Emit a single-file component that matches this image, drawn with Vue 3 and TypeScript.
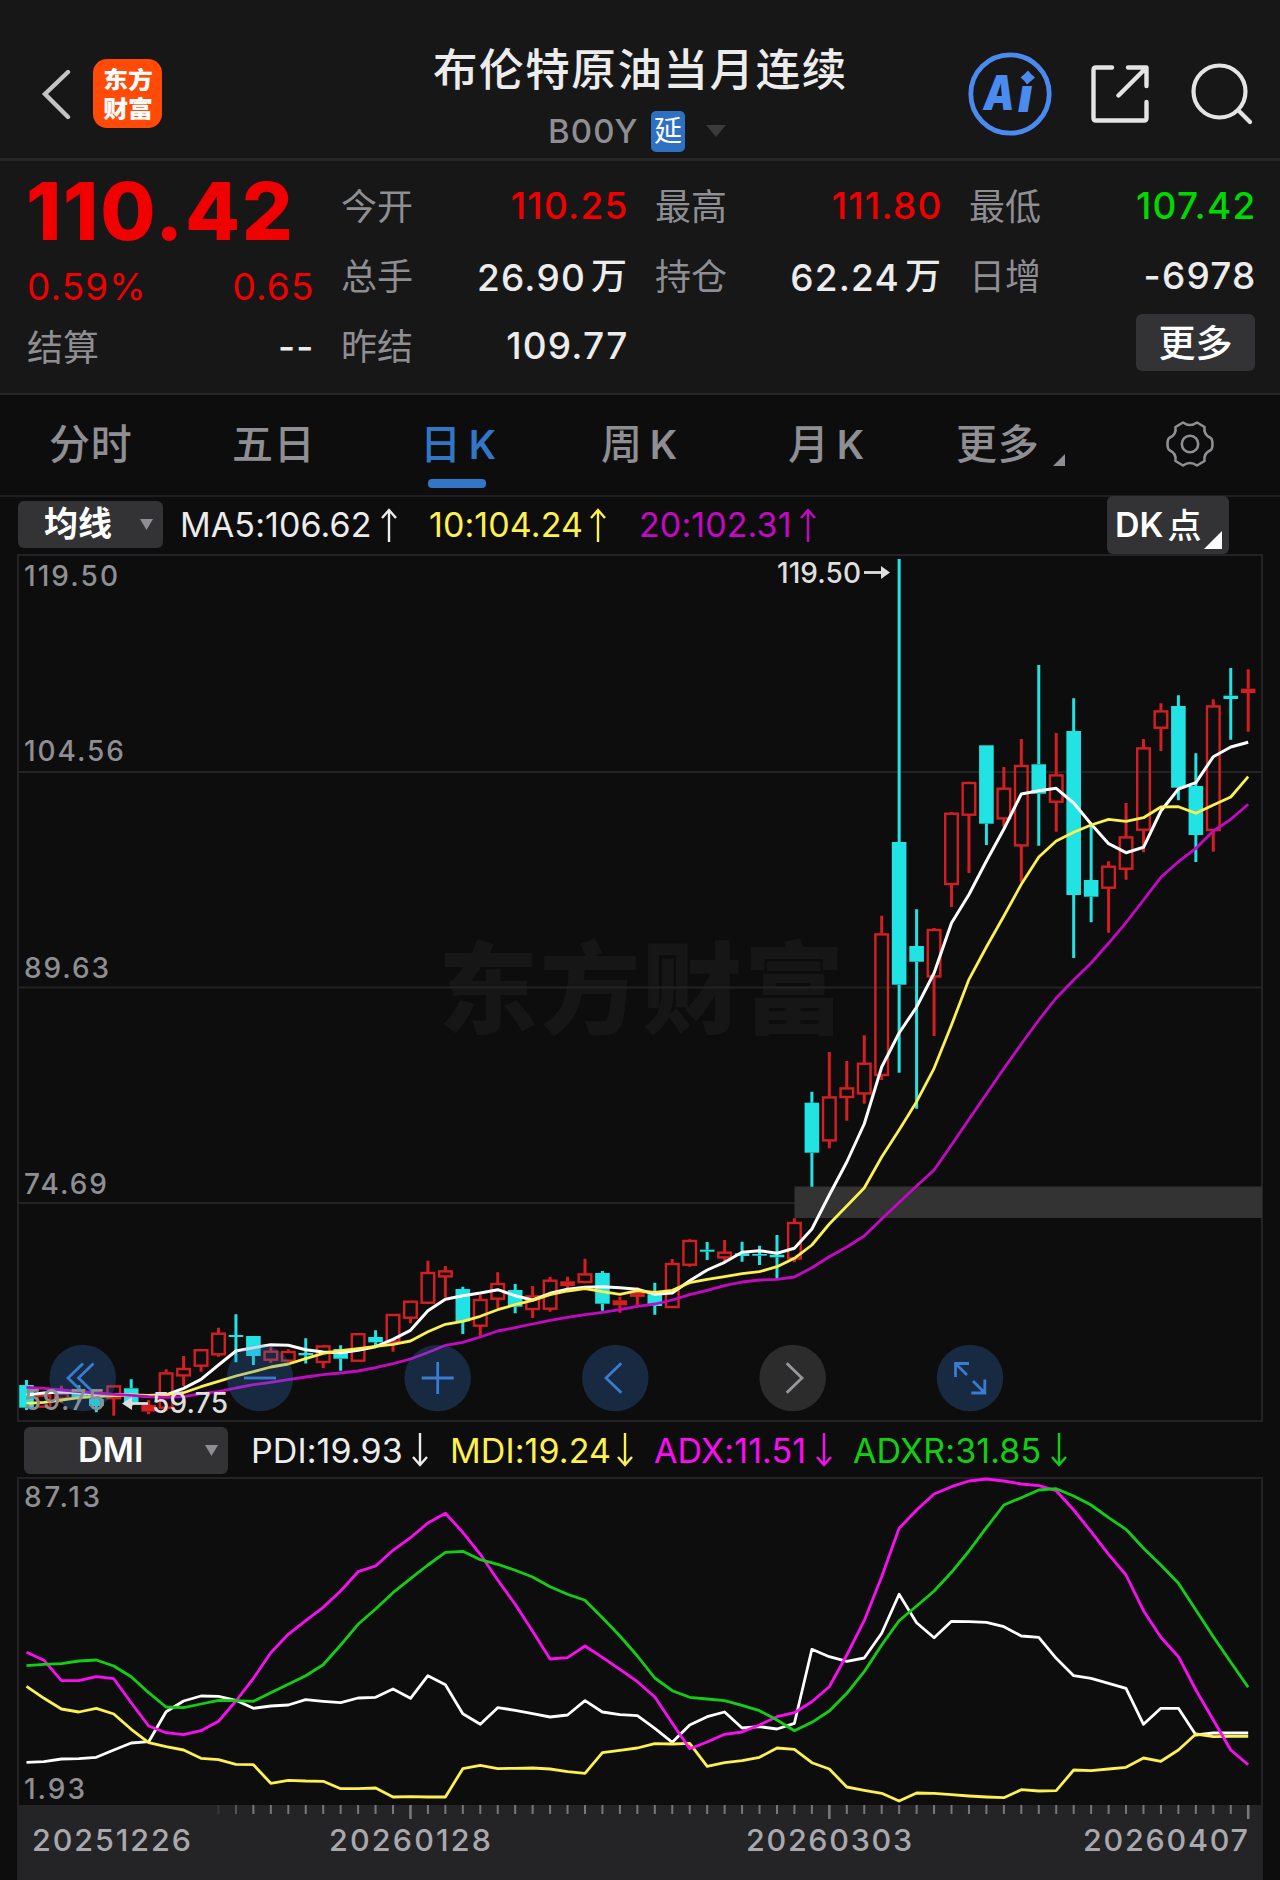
<script setup lang="ts">
interface Candle { x: number; up: boolean; solid: boolean; high: number; top: number; bottom: number; low: number }
type Row = [number, number, number, number, number]

const FIRST_X = 26.5
const STEP = 17.453
const xAt = (i: number) => FIRST_X + STEP * i

// kind (0 = falling, 1 = rising, 2 = rising with a thin solid body), high, body top, body bottom, low
const rows: Row[] = [
  [0, 1380, 1385, 1407.7, 1410], [1, 1392, 1395, 1407, 1407], [1, 1385.7, 1393, 1399, 1403], [0, 1385.3, 1392, 1397, 1402],
  [0, 1393, 1399, 1406, 1412.3], [1, 1385.7, 1385.7, 1398.5, 1415.7], [0, 1379.3, 1388.3, 1404, 1406], [2, 1400, 1405, 1411.5, 1414.3],
  [1, 1369.3, 1372.7, 1408, 1411], [1, 1356, 1368.3, 1375.7, 1386], [1, 1349.5, 1349.5, 1366, 1371.7], [1, 1327.7, 1333, 1354.6, 1356.7],
  [0, 1314.3, 1335, 1337, 1362.3], [0, 1336, 1336, 1356, 1365], [1, 1347.3, 1351, 1360, 1362.7], [1, 1349.3, 1351.3, 1361, 1361],
  [0, 1338.3, 1353, 1355.3, 1363.5], [1, 1345, 1345.7, 1362.3, 1368], [0, 1345.3, 1349, 1358.7, 1370.7], [1, 1333.5, 1333.5, 1361, 1361],
  [0, 1330.3, 1337, 1342.3, 1346], [1, 1314.3, 1314.3, 1341.7, 1351.7], [1, 1301, 1301, 1318, 1323.3], [1, 1260.7, 1272.3, 1303, 1304],
  [1, 1266, 1270.7, 1276.7, 1297.3], [0, 1286.7, 1289, 1321.3, 1334], [1, 1295, 1299.3, 1326, 1335.7], [1, 1272.3, 1283.3, 1299, 1308.3],
  [0, 1284, 1290, 1306.7, 1313.3], [1, 1286, 1295.7, 1309.3, 1318], [1, 1276.7, 1280, 1309, 1311.7], [2, 1276.7, 1281.3, 1286, 1289.3],
  [1, 1258.7, 1273.7, 1282.3, 1283.3], [0, 1271, 1273, 1303.7, 1310.7], [2, 1296.7, 1300.3, 1305.3, 1312.7], [1, 1287.3, 1292.5, 1296, 1306],
  [0, 1282.7, 1294.3, 1306, 1314.7], [1, 1259, 1263.3, 1307.3, 1307.3], [1, 1239.3, 1240.3, 1265, 1266.7], [0, 1242, 1249.7, 1251.7, 1260],
  [1, 1240, 1252, 1257.7, 1261], [0, 1241.7, 1253.3, 1256, 1261.7], [0, 1245.7, 1254, 1255.7, 1265], [0, 1235, 1254.7, 1257.3, 1279],
  [1, 1218.3, 1222.3, 1258.7, 1262.3], [0, 1091.7, 1102.7, 1152.7, 1186.7], [1, 1052, 1096.7, 1140.7, 1148.3], [1, 1061, 1087.7, 1097.3, 1120.7],
  [1, 1035.3, 1063, 1093.7, 1103.7], [1, 915.7, 933.7, 1075.3, 1080], [0, 559, 842, 984.7, 1072.7], [0, 909.3, 946, 961.7, 1108.7],
  [1, 928, 929.3, 976.7, 1036], [1, 812.3, 813, 884.3, 907], [1, 781.7, 782.3, 815, 873], [0, 745.3, 745.3, 823.7, 845],
  [1, 767, 788, 818.7, 826.7], [1, 739, 765.3, 845.7, 881.7], [0, 665, 764.3, 793.7, 845.7], [1, 733, 774.7, 802, 831.7],
  [0, 698.3, 731, 895, 958], [0, 825.7, 880, 896.7, 922.3], [1, 861.3, 866, 888, 932.7], [1, 803, 836.7, 869, 879.7],
  [1, 739, 747.7, 830, 852.3], [1, 703.3, 710.7, 728, 751], [0, 695.3, 706, 787.7, 800.3], [0, 753.3, 786, 835, 862],
  [1, 699.3, 705.7, 830.3, 851.7], [0, 668, 695.7, 699, 739.7], [2, 669.3, 688.7, 693, 731.7],
]
const candles: Candle[] = rows.map(([kind, high, top, bottom, low], i) => ({
  x: xAt(i), up: kind > 0, solid: kind !== 1, high, top, bottom, low,
}))

const ma5 = [1395, 1393, 1392, 1393, 1395, 1394.5, 1395.3, 1396, 1395, 1388.3, 1379.3, 1365, 1351, 1347.7, 1344.7, 1345.3, 1349.7, 1352, 1352.7, 1350.3, 1346.7, 1339.3, 1330.3, 1310.7,
  1299.3, 1295.7, 1293, 1289.7, 1295.7, 1300, 1293.3, 1289.3, 1287.3, 1286.7, 1287.7, 1289.3, 1294.3, 1293, 1280.7, 1270, 1262.3, 1252.3, 1250.7, 1253.3, 1248.3, 1229,
  1195, 1162, 1124, 1067, 1033, 1007, 973, 923, 894.5, 861, 829, 794, 790.7, 788.3, 803, 824, 843.7, 852.7, 847.3, 811, 789, 782.7, 756.7, 747, 742.3]
const ma10 = [1403.3, 1402.3, 1400, 1397.7, 1396.7, 1395.7, 1395, 1395.3, 1394.7, 1392.7, 1386.7, 1381.3, 1376, 1371.7, 1367, 1364, 1358.7, 1353.3, 1350.7, 1348.7, 1346.3, 1344.3, 1341, 1331.7,
  1324.3, 1321.3, 1316.3, 1309.7, 1304.7, 1300.3, 1294.7, 1291, 1288.7, 1291.7, 1294.3, 1290.7, 1292.3, 1290.3, 1282.7, 1279.3, 1276.7, 1273.7, 1271.7, 1266.7, 1258.3, 1245,
  1224, 1206, 1188, 1157, 1130, 1101.7, 1068.3, 1025, 979.3, 947, 916, 884.3, 857, 841, 832.3, 825, 819.3, 821.3, 817.7, 807, 806.7, 813.3, 805, 797, 776.7]
const ma20 = [1387.3, 1388.3, 1390, 1391.7, 1393, 1394.3, 1395.3, 1396.7, 1397.3, 1396.7, 1393.7, 1391.7, 1388, 1384.7, 1382.3, 1379.7, 1377, 1374.7, 1373, 1371, 1367.7, 1363.7, 1359, 1352.5,
  1345.3, 1342.3, 1337, 1331, 1327.7, 1324, 1320.3, 1317.3, 1314.7, 1312.3, 1309.7, 1306.3, 1304, 1300, 1294.7, 1290.3, 1285.7, 1282, 1280, 1279.3, 1277, 1267.7,
  1256.7, 1247, 1236, 1219, 1202.5, 1186, 1170, 1145, 1119.3, 1094, 1068.5, 1044, 1020, 998, 980, 963, 943.3, 922.7, 900, 877.3, 861.7, 848.3, 831, 819.3, 804.3]

// Distances in thirds of a pixel below the indicator row's top edge
const pdi = [1057, 1055, 1047, 1046, 1042, 1020, 999, 995, 905, 873, 858, 859, 871, 895, 888, 885, 869, 874, 878, 864, 862, 837, 865, 797, 824, 911, 943, 893, 901, 911, 921, 915, 872, 906, 914, 917, 955, 997, 945, 920, 906, 954, 950, 957, 940, 718, 740, 754, 744, 670, 553, 638, 683, 634, 635, 637, 650, 678, 682, 745, 797, 805, 820, 835, 943, 895, 895, 975, 969, 969, 969]
const mdi = [829, 865, 897, 906, 895, 912, 958, 998, 1010, 1020, 1045, 1049, 1063, 1064, 1120, 1111, 1113, 1114, 1136, 1136, 1134, 1161, 1160, 1161, 1161, 1076, 1066, 1076, 1075, 1074, 1077, 1085, 1090, 1028, 1021, 1014, 1001, 1002, 1000, 1069, 1058, 1052, 1042, 1014, 1018, 1058, 1077, 1131, 1141, 1150, 1173, 1149, 1150, 1154, 1158, 1161, 1163, 1139, 1143, 1142, 1080, 1082, 1077, 1072, 1044, 1054, 1020, 972, 980, 979, 979]
const adx = [727, 751, 812, 812, 800, 806, 878, 948, 968, 974, 962, 934, 873, 805, 728, 673, 632, 592, 543, 485, 468, 421, 383, 339, 310, 367, 433, 510, 583, 664, 747, 743, 708, 742, 778, 815, 861, 940, 1016, 996, 973, 966, 945, 920, 908, 875, 830, 735, 632, 500, 355, 300, 252, 230, 213, 207, 213, 222, 227, 242, 300, 365, 433, 495, 602, 682, 740, 840, 930, 1020, 1064]
const adxr = [767, 763, 761, 753, 750, 768, 800, 848, 891, 893, 882, 871, 872, 874, 848, 823, 797, 764, 705, 643, 597, 548, 506, 465, 427, 424, 449, 463, 481, 501, 530, 553, 571, 623, 678, 738, 804, 842, 862, 867, 872, 886, 902, 930, 962, 937, 903, 850, 785, 705, 632, 588, 543, 487, 423, 353, 285, 263, 240, 236, 258, 285, 323, 358, 415, 465, 520, 600, 680, 757, 832]

const line = (ys: number[]) => ys.map((y, i) => `${xAt(i).toFixed(1)},${y.toFixed(1)}`).join(' ')
const dmiLine = (ys: number[]) => line(ys.map((v) => 1410 + v / 3))

const maLines = [
  { color: '#ffffff', points: line(ma5), w: 3 },
  { color: '#fdf151', points: line(ma10), w: 2.8 },
  { color: '#c408c4', points: line(ma20), w: 2.8 },
]
const dmiLines = [
  { color: '#ffffff', points: dmiLine(pdi) },
  { color: '#fdf151', points: dmiLine(mdi) },
  { color: '#fb0cf3', points: dmiLine(adx) },
  { color: '#13cf13', points: dmiLine(adxr) },
]
const priceLabels = [
  { t: '119.50', y: 586, w: 94 }, { t: '104.56', y: 761, w: 100 }, { t: '89.63', y: 978, w: 85 },
  { t: '74.69', y: 1194, w: 83 }, { t: '59.75', y: 1410, w: 81 },
]
const ticks = Array.from({ length: 60 }, (_, k) => k + 11)
const isMajor = (i: number) => i === 22 || i === 46 || i === 70
const dates = [
  { t: '20251226', x: 32, w: 159 }, { t: '20260128', x: 329, w: 162 },
  { t: '20260303', x: 746, w: 166 }, { t: '20260407', x: 1083, w: 165 },
]

const quoteCols = [
  [{ k: '今开', v: '110.25', c: 'red' }, { k: '总手', v: '26.90', u: '万', c: '' }, { k: '昨结', v: '109.77', c: '' }],
  [{ k: '最高', v: '111.80', c: 'red' }, { k: '持仓', v: '62.24', u: '万', c: '' }],
  [{ k: '最低', v: '107.42', c: 'green' }, { k: '日增', v: '-6978', c: '' }],
] as { k: string; v: string; u?: string; c: string }[][]
const tabs = [
  { t: '分时', w: 'w1' }, { t: '五日', w: 'w2' }, { t: '日', k: 'K', w: 'w3', on: true },
  { t: '周', k: 'K', w: 'w4' }, { t: '月', k: 'K', w: 'w5' },
] as { t: string; k?: string; w: string; on?: boolean }[]
</script>

<template>
  <div class="app">
    <header class="top">
      <div class="left">
        <svg class="back" width="30" height="52" viewBox="0 0 30 52"><path d="M27 4 L4 26 L27 49" fill="none" stroke="#c4c4c4" stroke-width="4.4" stroke-linecap="round" /></svg>
        <div class="logo"><span>东方</span><span>财富</span></div>
      </div>
      <div class="title">
        <h1>布伦特原油当月连续</h1>
        <div class="sub"><span class="code">B00Y</span><span class="badge">延</span>
          <svg width="20" height="12" viewBox="0 0 20 12"><path d="M0 0H20L10 12Z" fill="#3b3b3d" /></svg>
        </div>
      </div>
      <div class="actions">
        <svg width="84" height="84" viewBox="0 0 84 84">
          <circle cx="42" cy="42" r="39.2" fill="none" stroke="#4b8bef" stroke-width="4.8" />
          <text class="ai" x="15.5" y="57.500" textLength="31" lengthAdjust="spacingAndGlyphs">A</text>
          <text class="ai" x="50" y="60">ı</text>
          <path d="M60 18.500L63.500 22.500L67 25.500L63 29L59 32.500L56 28.500L52.500 25.500L56.500 22Z" fill="#4b8bef" />
        </svg>
        <svg class="share" width="58" height="58" viewBox="0 0 58 58" fill="none" stroke="#e4e4e4" stroke-width="4.4" stroke-linecap="round" stroke-linejoin="round">
          <path d="M21 2.500H5Q2.500 2.500 2.500 5V53Q2.500 55.500 5 55.500H53Q55.500 55.500 55.500 53V37" /><path d="M37 2.500H55.500V21M55 3L27.500 30.500" />
        </svg>
        <svg class="search" width="62" height="62" viewBox="0 0 62 62" fill="none" stroke="#e4e4e4" stroke-width="4.2" stroke-linecap="round">
          <circle cx="28.500" cy="28.500" r="26" /><path d="M47.500 47.500L59 59" />
        </svg>
      </div>
    </header>

    <section class="quote">
      <div class="main">
        <div class="price">110.42</div>
        <div class="pair change"><span>0.59%</span><span>0.65</span></div>
        <div class="pair settle"><span class="key">结算</span><span class="val">--</span></div>
      </div>
      <div v-for="(col, ci) in quoteCols" :key="ci" class="col">
        <div v-for="r in col" :key="r.k" class="pair item">
          <span class="key">{{ r.k }}</span>
          <span class="val" :class="r.c">{{ r.v }}<i v-if="r.u">{{ r.u }}</i></span>
        </div>
        <button v-if="ci === 2" class="more">更多</button>
      </div>
    </section>

    <nav class="tabs">
      <div v-for="t in tabs" :key="t.w" class="tab" :class="[t.w, { on: t.on }]">{{ t.t }}<b v-if="t.k">{{ t.k }}</b></div>
      <div class="tab w6">更多<svg class="tri" width="12" height="12" viewBox="0 0 12 12"><path d="M12 0V12H0Z" fill="#8e8e93" /></svg></div>
      <svg class="gear" width="50" height="50" viewBox="-25 -25 50 50" fill="none" stroke="#8e8e93" stroke-width="2.600" stroke-linejoin="round">
        <circle r="8.200" />
        <path d="M-7 -21.500 Q0 -16.500 7 -21.500 L14.500 -17 Q13.500 -9.500 20 -6.500 Q22.500 -5.500 22.500 0 Q22.500 5.500 20 6.500 Q13.500 9.500 14.500 17 L7 21.500 Q0 16.500 -7 21.500 L-14.500 17 Q-13.500 9.500 -20 6.500 Q-22.500 5.500 -22.500 0 Q-22.500 -5.500 -20 -6.500 Q-13.500 -9.500 -14.500 -17Z" />
      </svg>
    </nav>

    <div class="legend ma">
      <button class="pick"><span>均线</span><svg width="13" height="11" viewBox="0 0 13 11"><path d="M0 0H13L6.500 11Z" fill="#8e8e93" /></svg></button>
      <span class="ind m1">MA5:106.62<svg class="arrow" viewBox="0 0 16 34"><path d="M8 34V2M1 10L8 2L15 10" /></svg></span>
      <span class="ind m2 yellow">10:104.24<svg class="arrow" viewBox="0 0 16 34"><path d="M8 34V2M1 10L8 2L15 10" /></svg></span>
      <span class="ind m3 purple">20:102.31<svg class="arrow" viewBox="0 0 16 34"><path d="M8 34V2M1 10L8 2L15 10" /></svg></span>
      <button class="dk">DK<i>点</i><svg width="18" height="18" viewBox="0 0 18 18"><path d="M18 0V18H0Z" fill="#fff" /></svg></button>
    </div>

    <svg class="chart" width="1280" height="868" viewBox="0 554 1280 868">
      <text class="water" x="438" y="1026" textLength="406">东方财富</text>
      <g stroke="#232325" stroke-width="2" fill="none">
        <rect x="18" y="555" width="1244" height="866" />
        <path d="M18 772H1262M18 987.500H1262M18 1203H1262" />
      </g>
      <rect x="794.500" y="1186.500" width="467.500" height="31.500" fill="#333333" />
      <g v-for="c in candles" :key="c.x" :stroke="c.up ? '#d41f22' : '#22e3e3'" :fill="c.up ? '#d41f22' : '#22e3e3'">
        <path :d="`M${c.x} ${c.high}V${c.top}M${c.x} ${c.bottom}V${c.low}`" stroke-width="3" />
        <rect v-if="c.solid" :x="c.x - 7.300" :y="c.top" width="14.600" :height="c.bottom - c.top" stroke="none" />
        <rect v-else :x="c.x - 6.300" :y="c.top + 0.700" width="12.600" :height="Math.max(1, c.bottom - c.top - 1)" fill="none" stroke-width="2.400" />
      </g>
      <polyline v-for="l in maLines" :key="l.color" :points="l.points" fill="none" :stroke="l.color" :stroke-width="l.w" stroke-linejoin="round" />
      <g class="round">
        <circle cx="82.700" cy="1378" r="33.300" /><circle cx="260" cy="1378" r="33.300" /><circle cx="437.700" cy="1378" r="33.300" />
        <circle cx="615.300" cy="1378" r="33.300" /><circle class="off" cx="792.700" cy="1378" r="33.300" /><circle cx="970" cy="1378" r="33.300" />
        <path d="M83 1363.500L68 1378L83 1392.500M93.500 1363.500L78.500 1378L93.500 1392.500" />
        <path d="M244 1378H276" />
        <path d="M421.700 1378H453.700M437.700 1362V1394" />
        <path d="M621.300 1363.300L606 1378L621.300 1392.700" />
        <path class="off" d="M786.700 1363.300L802 1378L786.700 1392.700" />
        <path d="M955.500 1377V1363.500H969M955.500 1363.500L967 1375M984.800 1379.500V1393H971.300M984.800 1393L973 1381" stroke-width="3.200" />
      </g>
      <text v-for="p in priceLabels" :key="p.t" class="axis" x="24" :y="p.y" :textLength="p.w">{{ p.t }}</text>
      <text class="mark" x="777" y="583" textLength="84">119.50</text>
      <path d="M864 572.500H884" stroke="#dedede" stroke-width="2.800" /><path d="M881 566L890 572.500L881 579Z" fill="#dedede" />
      <path d="M130 1403.500H148" stroke="#dedede" stroke-width="2.800" /><path d="M132 1397L122 1403.500L132 1410Z" fill="#dedede" />
      <text class="mark" x="152" y="1413" textLength="76">59.75</text>
    </svg>

    <div class="legend dmi">
      <button class="pick wide"><span>DMI</span><svg width="13" height="11" viewBox="0 0 13 11"><path d="M0 0H13L6.500 11Z" fill="#8e8e93" /></svg></button>
      <span class="ind d1">PDI:19.93<svg class="arrow" viewBox="0 0 16 34"><path d="M8 0V32M1 24L8 32L15 24" /></svg></span>
      <span class="ind d2 yellow">MDI:19.24<svg class="arrow" viewBox="0 0 16 34"><path d="M8 0V32M1 24L8 32L15 24" /></svg></span>
      <span class="ind d3 pink">ADX:11.51<svg class="arrow" viewBox="0 0 16 34"><path d="M8 0V32M1 24L8 32L15 24" /></svg></span>
      <span class="ind d4 lime">ADXR:31.85<svg class="arrow" viewBox="0 0 16 34"><path d="M8 0V32M1 24L8 32L15 24" /></svg></span>
    </div>

    <svg class="chart" width="1280" height="403" viewBox="0 1477 1280 403">
      <path d="M18 1880V1478H1262V1880" fill="none" stroke="#232325" stroke-width="2" />
      <rect x="18" y="1805" width="1244" height="75" fill="#242426" />
      <path v-for="i in ticks" :key="i" :d="`M${xAt(i)} 1805V${isMajor(i) ? 1819 : 1814}`" stroke="#77777b" :stroke-width="isMajor(i) ? 2.600 : 2" :opacity="i === 11 ? 0.25 : i === 12 ? 0.6 : 1" />
      <text class="axis" x="24" y="1507" textLength="76">87.13</text>
      <text class="axis" x="24" y="1799" textLength="61">1.93</text>
      <polyline v-for="l in dmiLines" :key="l.color" :points="l.points" fill="none" :stroke="l.color" stroke-width="2.800" stroke-linejoin="round" />
      <text v-for="d in dates" :key="d.t" class="date" :x="d.x" y="1851" :textLength="d.w">{{ d.t }}</text>
    </svg>
  </div>
</template>

<style>
body { background: #0d0d0d; }
</style>

<style scoped>
.app { width: 1280px; height: 1880px; overflow: hidden; background: #0d0d0d; color: #ececec; font-family: Inter, "Noto Sans CJK SC", sans-serif; display: flex; flex-direction: column; }
.app * { box-sizing: border-box; }
svg { display: block; flex: none; }
button { border: 0; padding: 0; font: inherit; color: #fff; background: #333335; }
i, b { font-style: normal; font-weight: inherit; }

.top { height: 161px; flex: none; background: #171717; border-bottom: 3px solid #262628; display: grid; grid-template-columns: 433px 412px 1fr; }
.left { display: flex; align-items: flex-start; padding: 59px 0 0 41px; }
.back { margin: 9px 22px 0 0; }
.logo { width: 69px; height: 69px; border-radius: 14px; background: #ff4a08; display: flex; flex-direction: column; align-items: center; padding-top: 5px; font: 900 25px/29px "Noto Sans CJK SC", sans-serif; color: #fff; }
.logo span { font-size: 23px; height: 29px; transform: scaleX(1.08); }
.title { display: flex; flex-direction: column; padding-top: 43px; }
h1 { margin: 0; font-size: 44.500px; line-height: 54px; font-weight: 500; letter-spacing: 1.600px; white-space: nowrap; }
.sub { display: flex; align-items: center; height: 42px; margin: 13px 0 0 115px; }
.code { font-size: 33px; font-weight: 500; color: #8e8e93; width: 103px; letter-spacing: 1.100px; }
.badge { width: 34px; height: 41px; border-radius: 5px; background: #2f70c3; color: #fff; font-size: 28px; line-height: 41px; text-align: center; margin-right: 21px; }
.actions { display: flex; padding: 52px 0 0 123px; }
.ai { font: italic 900 48px Inter, sans-serif; fill: #4b8bef; }
.share { margin: 13px 0 0 39px; }
.search { margin: 11px 0 0 42px; }

.quote { height: 234px; flex: none; background: #171717; border-bottom: 2px solid #262628; padding: 9px 0 0 28px; display: grid; grid-template-columns: repeat(4, 285px); column-gap: 29px; }
.price { height: 80px; line-height: 81px; font-size: 80px; font-weight: 800; color: #f00000; margin-left: -2px; letter-spacing: 1.800px; white-space: nowrap; }
.pair { display: flex; justify-content: space-between; align-items: center; font-size: 37px; font-weight: 500; }
.change { height: 73px; color: #f00000; font-weight: 400; letter-spacing: 1.100px; margin-left: -1px; }
.change span:last-child { margin-right: -1.500px; }
.settle { height: 46px; }
.item { height: 70px; }
.key { font-size: 36px; font-weight: 400; color: #8e8e93; margin: -3px 0 0 -1px; }
.val { letter-spacing: 1.200px; margin-right: -1.500px; }
.val i { margin-left: 5px; font-size: 36px; letter-spacing: 0; margin-right: 1.500px; position: relative; top: -2px; }
.red { color: #f00000; }
.green { color: #00d900; }
.more { display: block; margin: 4px 0 0 166px; width: 119px; height: 57px; border-radius: 6px; font-size: 37px; font-weight: 500; line-height: 59px; }

.tabs { height: 102px; flex: none; border-bottom: 2px solid #1f1f21; display: flex; padding-left: 49px; color: #8e8e93; font-size: 41px; font-weight: 500; line-height: 99px; }
.tab { flex: none; position: relative; white-space: nowrap; letter-spacing: 0.800px; }
.tab b { margin-left: 7px; font-size: 39px; font-weight: 600; }
.w1 { width: 183px; } .w2 { width: 188px; } .w3 { width: 181px; } .w4 { width: 187px; } .w5 { width: 168px; } .w6 { width: 208px; display: flex; }
.on { color: #3276c8; }
.on::after { content: ""; position: absolute; left: 8px; top: 84px; width: 58px; height: 9px; border-radius: 4px; background: #3276c8; }
.tri { margin: 59px 0 0 13px; }
.gear { margin: 24px 0 0 1px; }

.legend { flex: none; display: flex; align-items: center; font-size: 34px; white-space: nowrap; }
.ma { height: 57px; padding: 0 0 2px 18px; }
.dmi { height: 55px; padding: 1px 0 0 24px; }
.pick { width: 145px; height: 47px; border-radius: 6px; display: flex; align-items: center; justify-content: flex-end; padding-right: 10px; font-weight: 600; line-height: 44px; }
.pick span { width: 96px; text-align: left; position: relative; top: -1px; }
.wide { width: 204px; }
.wide span { width: 127px; top: 0; }
.ind { display: flex; align-items: center; justify-content: space-between; flex: none; letter-spacing: 0.100px; }
.arrow { width: 16px; height: 34px; fill: none; stroke: currentColor; stroke-width: 2.400; }
.m1 { width: 217px; margin-left: 17px; } .m2 { width: 177px; margin-left: 32px; } .m3 { width: 177px; margin-left: 33px; }
.d1 { width: 177px; margin-left: 23px; } .d2 { width: 183px; margin-left: 22px; } .d3 { width: 178px; margin-left: 21px; } .d4 { width: 214px; margin-left: 21px; }
.yellow { color: #fdf151; } .purple { color: #c408c4; } .pink { color: #fb0cf3; } .lime { color: #13cf13; }
.dk { width: 122px; height: 58px; border-radius: 6px; margin-left: 291px; display: flex; align-items: center; padding-left: 8px; font-weight: 600; font-size: 34px; }
.dk i { margin: -3px 0 0 4px; font-weight: 500; }
.dk svg { margin: 31px 0 0 3px; }

.water { font: 900 100px "Noto Sans CJK SC", sans-serif; fill: #161616; }
.axis { font-size: 28px; font-weight: 500; fill: #8e8e93; }
.mark { font-size: 28px; font-weight: 500; fill: #dedede; }
.date { font-size: 30.500px; font-weight: 500; fill: #a9a9ad; }
.round circle { fill: rgba(52, 118, 200, 0.28); }
.round circle.off { fill: rgba(125, 125, 130, 0.28); }
.round path { fill: none; stroke: #3a7ccf; stroke-width: 2.800; }
.round path.off { stroke: #98989c; }
</style>
